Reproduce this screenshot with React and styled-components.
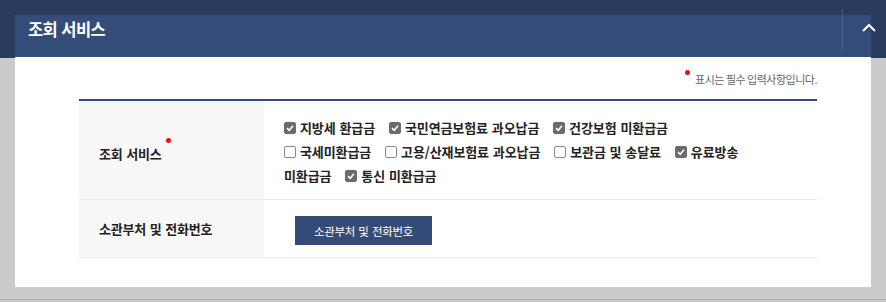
import React from "react"
import styled, { createGlobalStyle } from "styled-components"

const Global = createGlobalStyle`
  html, body {
    margin: 0;
    padding: 0;
    background: #cbcbcb;
    font-family: "Noto Sans CJK KR", "Noto Sans", sans-serif;
  }
`

const Page = styled.div`
  position: relative;
  padding: 15px 15px 12px;
  background: linear-gradient(#2a3c5e 0 58px, #cbcbcb 58px);
  border-bottom: 1px solid #b1b1b1;
`

const Panel = styled.section`
  background: white;
  width: 856px;
  height: 272px;
  display: flex;
  flex-direction: column;
`

const Header = styled.header`
  height: 43px;
  box-sizing: border-box;
  padding: 3px 13px 0;
  background: #344c78;
`

const Title = styled.h2`
  margin: 0;
  color: white;
  font-size: 16.5px;
  font-weight: 700;
  line-height: 22px;
  letter-spacing: -0.6px;
  word-spacing: 1px;
`

const Toggle = styled.button`
  position: absolute;
  top: 9px;
  right: 0;
  width: 44px;
  height: 40px;
  box-sizing: border-box;
  padding: 14px 10px 0 0;
  display: flex;
  justify-content: flex-end;
  align-items: flex-start;
  background: none;
  border: none;
  border-left: 1px solid rgba(255, 255, 255, 0.14);
`

const Body = styled.div`
  padding: 13px 54px 29px 64px;
`

const Note = styled.p`
  margin: 0 0 12px;
  text-align: right;
  font-size: 11px;
  line-height: 16px;
  color: #666;
  letter-spacing: -0.5px;
`

const Dot = styled.i`
  display: inline-block;
  width: 5px;
  height: 5px;
  border-radius: 50%;
  background: #f00d0d;
  vertical-align: ${p => p.$lift}px;
  margin: ${p => p.$margin};
`

const Table = styled.div`
  border-top: 2px solid #344b78;
`

const Row = styled.div`
  display: grid;
  grid-template-columns: 185px 1fr;
  border-bottom: 1px solid #ebebeb;
`

const Th = styled.div`
  background: #f8f8f8;
  padding: 0 20px;
  display: flex;
  align-items: center;
  font-size: 13px;
  font-weight: 700;
  color: #222;
  letter-spacing: -0.2px;
  word-spacing: 1px;
`

const Td = styled.div`
  padding: ${p => p.$pad};
`

const Checks = styled.div`
  max-width: 470px;
  font-size: 13px;
  font-weight: 700;
  line-height: 24px;
  color: #222;
  letter-spacing: -0.1px;
  word-spacing: 1px;
  word-break: keep-all;
`

const Item = styled.span`
  margin-right: 10px;
`

const Nowrap = styled.span`
  white-space: nowrap;
`

const Box = styled.span`
  display: inline-block;
  width: 12px;
  height: 12px;
  box-sizing: border-box;
  margin-right: 4px;
  border-radius: 2px;
  vertical-align: -1px;
  background: ${p => (p.$on ? "#6b6b6b" : "white")};
  border: 1px solid ${p => (p.$on ? "#6b6b6b" : "#8a8a8a")};
  position: relative;
  svg {
    position: absolute;
    left: 1px;
    top: 1px;
  }
`

const Button = styled.button`
  height: 29px;
  width: 137px;
  border: none;
  background: #344b78;
  color: white;
  font-family: inherit;
  font-size: 11.5px;
  letter-spacing: -0.3px;
  word-spacing: 1px;
`

const services = [
  ["지방세 환급금", true],
  ["국민연금보험료 과오납금", true],
  ["건강보험 미환급금", true],
  ["국세미환급금", false],
  ["고용/산재보험료 과오납금", false],
  ["보관금 및 송달료", false],
  ["유료방송 미환급금", true],
  ["통신 미환급금", true],
]

const Check = ({ label, on }) => {
  const [first, ...rest] = label.split(" ")
  return (
    <Item>
      <Nowrap>
        <Box $on={on}>
          {on && (
            <svg width="8" height="8" viewBox="0 0 8 8">
              <polyline points="1,4.2 3.2,6.3 7,1.8" fill="none" stroke="white" strokeWidth="1.6" />
            </svg>
          )}
        </Box>
        {first}
      </Nowrap>
      {rest.map(w => (
        <React.Fragment key={w}>
          {" "}
          <Nowrap>{w}</Nowrap>
        </React.Fragment>
      ))}
    </Item>
  )
}

export default function App() {
  return (
    <Page>
      <Global />
      <Panel>
        <Header>
          <Title>조회 서비스</Title>
        </Header>
        <Body>
          <Note>
            <Dot $lift={9} $margin="0 5px 0 0" />
            표시는 필수 입력사항입니다.
          </Note>
          <Table>
            <Row>
              <Th>
                <span>
                  조회 서비스
                  <Dot $lift={16} $margin="0 0 0 4px" />
                </span>
              </Th>
              <Td $pad="15px 20px 11px">
                <Checks>
                  {services.map(([label, on]) => (
                    <React.Fragment key={label}>
                      <Check label={label} on={on} />{" "}
                    </React.Fragment>
                  ))}
                </Checks>
              </Td>
            </Row>
            <Row>
              <Th>
                <span>소관부처 및 전화번호</span>
              </Th>
              <Td $pad="16px 20px 12px 31px">
                <Button>소관부처 및 전화번호</Button>
              </Td>
            </Row>
          </Table>
        </Body>
      </Panel>
      <Toggle aria-label="접기">
        <svg width="14" height="9" viewBox="0 0 14 9">
          <polyline points="1,8 7,2 13,8" fill="none" stroke="white" strokeWidth="2" />
        </svg>
      </Toggle>
    </Page>
  )
}
